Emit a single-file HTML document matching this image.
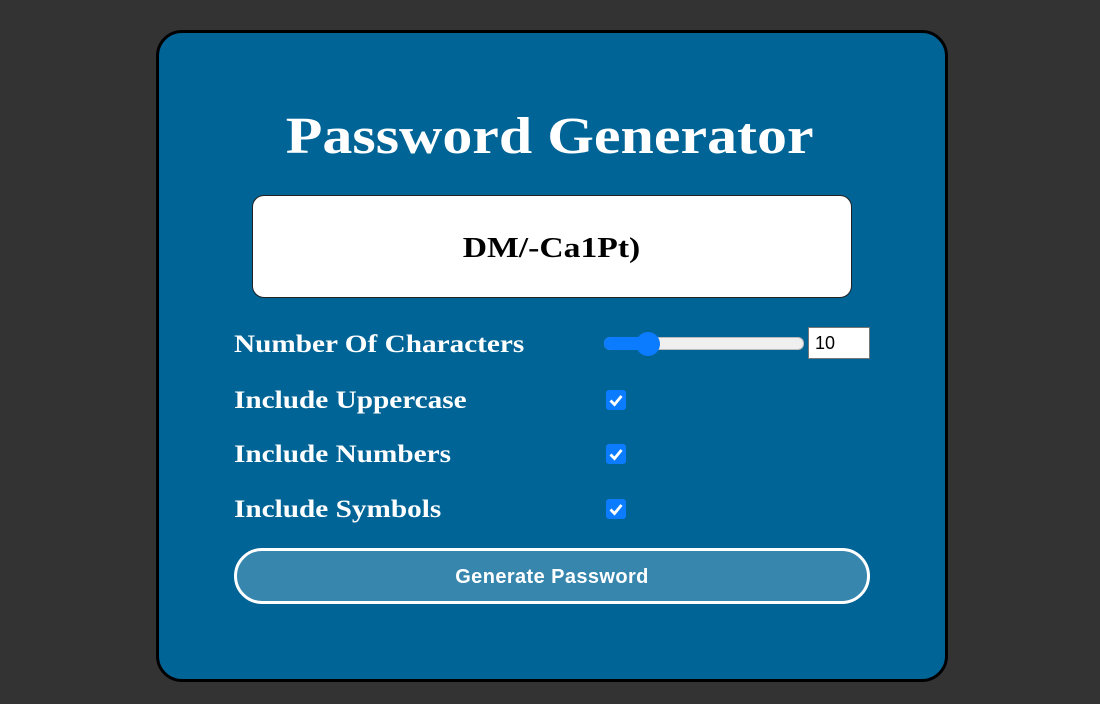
<!DOCTYPE html>
<html><head><style>
body{margin:0;width:1100px;height:704px;background:#333333;position:relative;overflow:hidden;font-family:"Liberation Serif",serif}
.card{position:absolute;left:156px;top:30px;width:786px;height:646px;background:#006496;border:3px solid #000;border-radius:26px}
.a{position:absolute}
h1{position:absolute;left:0;width:1100px;top:104px;margin:0;text-align:center;color:#fff;font-size:52px;font-weight:bold;line-height:66px;transform:scaleX(1.153);transform-origin:552px 0}
.pw{left:252px;top:195px;width:598px;height:101px;background:#fff;border:1px solid #222;border-radius:12px;text-align:center;line-height:104px;font-size:29px;font-weight:bold;color:#000}
.pw span{display:inline-block;transform:scaleX(1.16)}
.lbl{left:234px;color:#fff;font-size:25px;font-weight:bold;line-height:30px;transform:scaleX(1.17);transform-origin:0 0;white-space:nowrap}
.btn{left:234px;top:548px;width:630px;height:50px;border:3px solid #fff;border-radius:28px;background:#3686ae;color:#fff;font-family:"Liberation Sans",sans-serif;font-weight:bold;font-size:20px;text-align:center;line-height:52px;letter-spacing:0.4px}
</style></head><body>
<div class="card"></div>
<h1>Password Generator</h1>
<div class="a pw"><span>DM/-Ca1Pt)</span></div>
<div class="a lbl" style="top:330px">Number Of Characters</div>
<div class="a lbl" style="top:386px">Include Uppercase</div>
<div class="a lbl" style="top:440px">Include Numbers</div>
<div class="a lbl" style="top:495px">Include Symbols</div>
<div class="a" style="left:604px;top:337px;width:198px;height:11px;background:#efefef;border:1px solid #bbb;border-radius:6px"></div>
<div class="a" style="left:604px;top:337px;width:44px;height:13px;background:#0b7cff;border-radius:6px"></div>
<div class="a" style="left:636px;top:332px;width:24px;height:24px;background:#0b7cff;border-radius:50%"></div>
<div class="a" style="left:808px;top:327px;font-family:'Liberation Sans',sans-serif;font-size:18px;line-height:31px;padding-left:6px;box-sizing:border-box;width:62px;height:32px;background:#fff;border:1px solid #777">10</div>
<svg class="a" style="left:606px;top:390px" width="20" height="20"><rect width="20" height="20" rx="3" fill="#0b7cff"/><path d="M4.5 10.5l4 4 7-8.5" stroke="#fff" stroke-width="2.8" fill="none"/></svg>
<svg class="a" style="left:606px;top:444px" width="20" height="20"><rect width="20" height="20" rx="3" fill="#0b7cff"/><path d="M4.5 10.5l4 4 7-8.5" stroke="#fff" stroke-width="2.8" fill="none"/></svg>
<svg class="a" style="left:606px;top:499px" width="20" height="20"><rect width="20" height="20" rx="3" fill="#0b7cff"/><path d="M4.5 10.5l4 4 7-8.5" stroke="#fff" stroke-width="2.8" fill="none"/></svg>
<div class="a btn">Generate Password</div>
</body></html>
